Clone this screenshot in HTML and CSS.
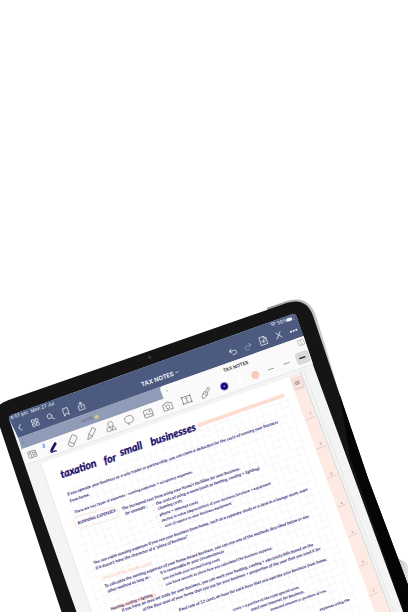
FILE: index.html
```html
<!DOCTYPE html>
<html lang="en">
<head>
<meta charset="utf-8">
<meta name="viewport" content="width=device-width, initial-scale=1">
<title>Tax notes</title>
<link rel="stylesheet" href="styles.css">
</head>
<body>
<main class="stage">
<svg class="tablet" viewBox="0 -870 1224 1836" role="img" aria-label="Tablet showing handwritten tax notes">
  <defs>
    <linearGradient id="rim" x1="0" y1="0" x2="1" y2="0"><stop offset="0" stop-color="#999"/><stop offset="1" stop-color="#ddd"/></linearGradient>
    <linearGradient id="shade" x1="0" y1="0" x2="1" y2="0"><stop offset="0" stop-color="#bbb"/><stop offset="1" stop-color="#e4e4e4"/></linearGradient>
    <pattern id="grid" width="21" height="21" patternUnits="userSpaceOnUse" patternTransform="translate(575 405) rotate(-19)"><path d="M0 0H21M0 0V21" stroke="#ececf0" stroke-width="2" fill="none"/></pattern>
  </defs>

  <!-- body of the tablet -->
  <path d="M1190 806Q1208 806 1224 826V900Z" fill="url(#shade)"/>
  <path d="M800 54L860 33Q922 14 946 72L974 160L1030 350L1000 400Z" fill="url(#rim)"/>
  <path d="M-4 347Q8 336 28 329L860 39Q920 20 940 80L1106 570L1224 884V970H186L0 412Z" fill="#151515"/>
  <path d="M1018 310L1106 570L1224 884V966H1211L1050 500Z" fill="#050505"/>
  <circle cx="449" cy="202" r="6" fill="#252a38"/><circle cx="449" cy="202" r="2" fill="#48516c"/>

  <!-- screen -->
  <path d="M27 386Q26 378 36 374L872 74Q884 68 889 78L936 216L1065 570L1211 970H231L110 628Z" fill="#f4f4f5"/>
  <path d="M27 386Q26 378 36 374L872 74Q884 68 889 78L911 138L480 291L55 444Z" fill="#4c5a80"/>
  <path d="M55 444L480 290L492 326L65 478Z" fill="#909cb7"/>
  <path d="M65 478L491 326L481 300Q480 292 488 288L911 138L939 222L80 524Z" fill="#fafafa"/>
  <path d="M80 524L939 222" class="edge"/>

  <!-- paper -->
  <path d="M122 521L868 261L1130 970H276Z" fill="#fff"/>
  <path d="M122 521L276 970" class="edge"/>
  <path d="M576 408L862 318L1090 970H300L214 700L200 600Z" fill="url(#grid)"/>
  <path d="M868 261L900 250L916 294L1172 970H1126Z" fill="#fceae3"/>
  <path d="M900 242L918 290L1174 970" class="tabline"/>
  <path d="M910 238L1184 970" class="edge"/>
  <path d="M886 301L914 291M917 390L946 379M947 478L978 467M981 565L1010 554M1012 652L1041 641M1044 741L1072 730M1076 830L1104 819M1107 918L1136 907" class="tabline"/>
  <path d="M874 270L902 260L912 289L884 299Z" fill="#fbe3da" stroke="#c9bab5" stroke-width="1"/>
  <path d="M883 277L898 272M884 281L899 276M886 285L900 280" stroke="#777" stroke-width="2"/>
  <g class="num">
    <text transform="translate(929 374) rotate(-19)">1</text><text transform="translate(960 464) rotate(-19)">2</text>
    <text transform="translate(992 555) rotate(-19)">3</text><text transform="translate(1023 644) rotate(-19)">4</text>
    <text transform="translate(1056 731) rotate(-19)">5</text><text transform="translate(1087 819) rotate(-19)">6</text>
    <text transform="translate(1119 907) rotate(-19)">7</text>
  </g>
  <path d="M598 405L848 317" stroke="#fcddcf" stroke-width="11" stroke-linecap="round"/>

  <!-- status and navigation bar -->
  <g class="status">
    <text transform="translate(33 389) rotate(-19)">8:57 pm</text>
    <text transform="translate(94 368) rotate(-19)">Mon 27 Jul</text>
    <text transform="translate(833 105) rotate(-19)">59%</text>
  </g>
  <text class="heading" transform="translate(426 290) rotate(-19)">TAX NOTES</text>
  <text class="tab" transform="translate(671 247) rotate(-19)">TAX NOTES</text>
  <text class="maintab" transform="translate(245 399) rotate(-19)">MAIN</text>
  <path d="M289 371L292 377L299 377L294 382L296 389L290 385L284 389L286 382L281 377L288 377Z" fill="#dfcc7e"/>
  <g class="navicon">
    <path d="M527 247L531 248L534 244" />
    <g transform="translate(60 413) rotate(-19)"><path d="M4-9L-4 0L4 9"/></g>
    <g transform="translate(106 398) rotate(-19)"><rect x="-10" y="-10" width="8" height="8" rx="1"/><rect x="2" y="-10" width="8" height="8" rx="1"/><rect x="-10" y="2" width="8" height="8" rx="1"/><rect x="2" y="2" width="8" height="8" rx="1"/></g>
    <g transform="translate(151 380) rotate(-19)"><circle cx="-2" cy="-2" r="7"/><path d="M4 4L10 11"/></g>
    <g transform="translate(198 365) rotate(-19)"><path d="M-7-11H7V11L0 4L-7 11Z"/></g>
    <g transform="translate(244 349) rotate(-19)"><path d="M-4-3H-9V10H9V-3H4M0 4V-13M-5-8L0-13L5-8"/></g>
    <g transform="translate(699 185) rotate(-19)"><path d="M-4-9L-10-3L-4 3M-10-3H4Q10-3 10 3Q10 9 3 9H-2"/></g>
    <g transform="translate(744 170) rotate(-19)" opacity=".45"><path d="M4-9L10-3L4 3M10-3H-4Q-10-3-10 3Q-10 9-3 9H2"/></g>
    <g transform="translate(790 152) rotate(-19)"><path d="M-9-12H4L10-6V12H-9ZM4-12V-5H10M0-4V7M-5 2H6"/></g>
    <g transform="translate(836 136) rotate(-19)"><path d="M-6-9L8 8M7-9L-5 6M-9 9L-5 6"/></g>
    <path d="M812 101Q818 96 826 98M815 104Q819 101 824 102M819 107L821 106"/>
    <path d="M863 90L872 87" stroke-width="9"/><path d="M859 85L880 78L884 87L864 95Z" opacity=".5" stroke-width="1"/>
  </g>
  <g fill="#fff"><circle cx="873" cy="125" r="3"/><circle cx="881" cy="122" r="3"/><circle cx="889" cy="119" r="3"/></g>
  <path d="M65 456L71 460M71 455L66 461" stroke="#596786" stroke-width="1"/>
  <path d="M498 300L505 305M505 299L499 306" stroke="#888" stroke-width="1"/>

  <!-- drawing tools -->
  <path d="M890 190L915 181Q922 179 925 186L932 207Q934 213 927 216L902 225Q895 227 892 220L885 199Q883 193 890 190Z" fill="#dadada"/>
  <g class="tool">
    <g transform="translate(97 492) rotate(-19)"><rect x="-12" y="-9" width="24" height="19" rx="2"/><path d="M-4-9V10M-9-4H-7M-9 0H-7M2-4H8V5H2Z"/></g>
    <g transform="translate(217 453) rotate(22)"><path d="M-8-15Q-8-18-5-18H6Q9-18 9-15V12Q9 16 5 16H-5Q-8 16-8 12ZM-8 6H9"/></g>
    <g transform="translate(274 431) rotate(26)"><path d="M-6-18H6V9L2 12V18L-3 20V12L-6 9ZM-6 5H6"/></g>
    <g transform="translate(332 411) rotate(-19)"><circle cx="2" cy="-8" r="8"/><rect x="-13" y="0" width="12" height="12" rx="3"/><path d="M8-1L15 11H1Z"/></g>
    <g transform="translate(387 388) rotate(-19)"><ellipse rx="13" ry="11"/><path d="M-5 10Q-8 15-3 17"/></g>
    <g transform="translate(445 370) rotate(-19)"><rect x="-13" y="-11" width="26" height="22" rx="2"/><path d="M-13 5L-5-1L2 5L6 2L13 9"/><circle cx="6" cy="-5" r="2"/></g>
    <g transform="translate(503 349) rotate(-19)"><path d="M-14-8H-7L-4-12H5L8-8H14V11H-14Z"/><circle cy="1" r="6"/></g>
    <g transform="translate(560 329) rotate(-19)"><rect x="-13" y="-10" width="26" height="20"/><path d="M-5-5H5M0-5V6M-3 6H3"/><path d="M-15-10H-11M11-10H15M-15 10H-11M11 10H15" stroke-width="4"/></g>
    <g transform="translate(617 309) rotate(30)"><path d="M-2-2L-3-18H4L3-2M-6-2H7V5H-6ZM-6 5L-4 15L1 19L5 14L7 5"/></g>
    <g transform="translate(903 157) rotate(-19)" opacity=".6"><path d="M-9-7H9V8H-9ZM0-7V8"/></g>
  </g>
  <g transform="translate(159 473) rotate(29)"><path d="M-4-16Q0-19 4-16V9L0 17L-4 9Z" fill="#211164"/></g>
  <path d="M154 488Q160 482 170 483" stroke="#211164" stroke-width="4" fill="none"/>
  <path d="M129 464L136 471L130 474V461L135 465L128 471" stroke="#479bff" stroke-width="2" fill="none"/>
  <circle cx="673" cy="289" r="12" fill="#16007a" stroke="#c9c6dd" stroke-width="2"/><circle cx="673" cy="289" r="3" fill="#8379bb"/>
  <circle cx="719" cy="270" r="12" fill="#fff" stroke="#f0f0f0"/>
  <circle cx="766" cy="255" r="12" fill="#f9cbbd"/>
  <path d="M804 240L822 234" stroke="#777" stroke-width="2"/><path d="M851 223L869 217" stroke="#666" stroke-width="2"/><path d="M898 206L916 200" stroke="#222" stroke-width="4"/>

  <!-- handwritten page -->
  <g class="title">
    <text transform="translate(185 565) rotate(-19)">taxation</text>
    <text transform="translate(315 523) rotate(-19)">for</text>
    <text transform="translate(363 498) rotate(-19)">small</text>
    <text transform="translate(455 467) rotate(-19)">businesses</text>
  </g>
  <path d="M235 712Q222 714 225 702Q214 694 226 686Q228 674 243 679Q251 667 263 674Q272 662 284 668Q294 656 306 662Q318 650 329 656Q344 647 347 658Q359 663 351 672Q354 684 341 684Q334 695 322 689Q312 701 301 695Q291 706 280 701Q270 713 260 706Q246 719 235 712Z" fill="none" stroke="#f8d9ce" stroke-width="2"/>
  <path d="M332 958L468 914" stroke="#fde4da" stroke-width="12"/>
  <g class="note">
    <text transform="translate(203 617) rotate(-19)">If you operate your business as a sole trader or partnership, you can claim a deduction for the costs of running your business</text>
    <text transform="translate(211 637) rotate(-19)">from home.</text>
    <text class="small" transform="translate(224 671) rotate(-19)">There are two types of expenses - running expenses + occupancy expenses.</text>
    <text transform="translate(235 704) rotate(-19)">RUNNING EXPENSES</text>
    <text transform="translate(367 661) rotate(-19)">The increased cost from using your home's facilities for your business.</text>
    <text transform="translate(377 675) rotate(-19)">for example :</text>
    <text transform="translate(469 645) rotate(-19)">the costs of using a room (such as heating, cooling + lighting)</text>
    <text transform="translate(475 660) rotate(-19)">cleaning costs</text>
    <text transform="translate(480 679) rotate(-19)">phone + internet costs</text>
    <text class="small" transform="translate(486 696) rotate(-19)">decline in value (depreciation) of your business furniture + equipment</text>
    <text class="small" transform="translate(496 712) rotate(-19)">cost of repairs to your business equipment</text>
    <text transform="translate(281 823) rotate(-19)">You can claim running expenses if you run your business from home, such as a separate study or a desk in a lounge room, even</text>
    <text transform="translate(288 839) rotate(-19)">if it doesn't have the character of a "place of business"</text>
    <text class="peach" transform="translate(306 870) rotate(-17)">CALCULATING YOUR CLAIM</text>
    <text transform="translate(315 893) rotate(-19)">To calculate the running expenses of your home-based business, you can use one of the methods described below or any</text>
    <text transform="translate(324 908) rotate(-19)">other method as long as :</text>
    <text transform="translate(482 853) rotate(-19)">it is reasonable in your circumstances</text>
    <text class="small" transform="translate(490 870) rotate(-19)">you exclude your normal living costs</text>
    <text class="small" transform="translate(499 887) rotate(-19)">you have records to show how you calculated the business expense.</text>
    <text class="small" transform="translate(334 961) rotate(-19)">Heating, cooling + lighting</text>
    <text transform="translate(367 965) rotate(-19)">If you have an area set aside for your business, you can work your heating, cooling + electricity bills based on the</text>
    <text transform="translate(430 963) rotate(-19)">of the floor area of your home that you use for your business + proportion of the year that you used it for</text>
    <text transform="translate(538 964) rotate(-19)">fixed rate of 52 cents an hour for each hour that you operate your business from home.</text>
    <text class="small" transform="translate(700 963) rotate(-19)">costs + a portion of the total special costs.</text>
    <text transform="translate(754 963) rotate(-19)">used your internet for business.</text>
    <text class="small" transform="translate(812 963) rotate(-19)">assessed amount or portions of use.</text>
    <text class="small" transform="translate(960 963) rotate(-19)">expenses using the</text>
  </g>
  <g fill="#f6cabb"><circle cx="457" cy="645" r="2"/><circle cx="462" cy="662" r="2"/><circle cx="469" cy="680" r="2"/><circle cx="475" cy="697" r="2"/><circle cx="482" cy="713" r="2"/><circle cx="473" cy="855" r="2"/><circle cx="479" cy="870" r="2"/><circle cx="486" cy="887" r="2"/></g>
</svg>
</main>
</body>
</html>
```
FILE: styles.css
```css
body {
  margin: 0;
  background: #fff;
}

.stage {
  overflow: hidden;
}

.tablet {
  display: block;
  width: 100%;
  height: auto;
  font-family: Lato, "Liberation Sans", sans-serif;
}

.edge {
  fill: none;
  stroke: #dedfe2;
  stroke-width: 2;
}

.tabline {
  fill: none;
  stroke: #cfc5c2;
  stroke-width: 2;
}

.num {
  font-size: 10px;
  fill: #776b68;
}

.status {
  font-family: Inter, sans-serif;
  font-size: 14px;
  font-weight: 500;
  fill: #dfe3ed;
}

.heading {
  font-family: Inter, sans-serif;
  font-size: 18px;
  font-weight: 600;
  fill: #fff;
}

.tab {
  font-family: Inter, sans-serif;
  font-size: 14px;
  font-weight: 600;
  fill: #333;
}

.maintab {
  font-family: Inter, sans-serif;
  font-size: 14px;
  fill: #64708b;
}

.navicon {
  fill: none;
  stroke: #f2f4fa;
  stroke-width: 2;
  stroke-linecap: round;
  stroke-linejoin: round;
}

.tool {
  fill: none;
  stroke: #77777a;
  stroke-width: 2;
  stroke-linejoin: round;
}

.title {
  font-size: 32px;
  font-weight: 700;
  font-style: italic;
  fill: #1c0c66;
  stroke: #1c0c66;
  stroke-width: 1;
}

.note {
  font-size: 13px;
  font-weight: 700;
  font-style: italic;
  fill: #302576;
}

.note .small {
  font-size: 12px;
}

.note .peach {
  font-size: 13px;
  font-weight: 400;
  fill: #f4bba9;
}
```
